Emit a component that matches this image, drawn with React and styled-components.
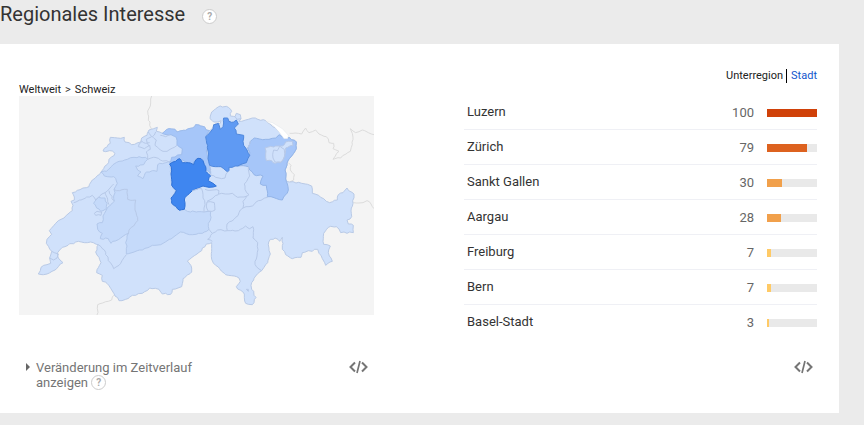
import styled, { createGlobalStyle } from 'styled-components';

const GlobalStyle = createGlobalStyle`
    body {
        margin: 0;
        background-color: #ebebeb;
        font-family: Roboto, "Liberation Sans", sans-serif;
        color: #333;
    }
`;
const Page = styled.main`
    padding-right: 25px;
`;
const Header = styled.header`
    display: flex;
    align-items: center;
    gap: 17px;
    height: 28px;
    padding-bottom: 16px;
`;
const Title = styled.h1`
    margin: 0;
    font-size: 20px;
    font-weight: 400;
    line-height: 28px;
`;
const HelpButton = styled.button`
    box-sizing: border-box;
    display: inline-flex;
    align-items: center;
    justify-content: center;
    width: 15px;
    height: 15px;
    margin: ${props => props.$raised ? "4px 0 0" : "0"};
    padding: 0;
    border: 1px solid #ccc;
    border-radius: 50%;
    background-color: #fff;
    color: #aaa;
    font-family: inherit;
    font-size: 10px;
    font-weight: 700;
    line-height: 13px;
    vertical-align: top;
    cursor: pointer;
`;
const Card = styled.section`
    display: grid;
    grid-template-columns: 355fr 353fr;
    column-gap: 90px;
    padding: 25px 22px 23px 19px;
    background-color: #fff;
`;
const MapPanel = styled.div`
    padding-top: 14px;
`;
const Breadcrumb = styled.nav`
    display: flex;
    gap: 4px;
    font-size: 11px;
    line-height: 13px;
`;
const Crumb = styled.a`
    color: #222;
    text-decoration: none;
`;
const MapSvg = styled.svg`
    display: block;
    width: 100%;
    background-color: #f4f4f4;
`;
const Tabs = styled.nav`
    display: flex;
    justify-content: flex-end;
    padding-bottom: 12px;
    font-size: 11px;
    line-height: 14px;
`;
const Tab = styled.a`
    padding: ${props => props.$active ? "0 3px 0 0" : "0 0 0 4px"};
    border-right: ${props => props.$active ? "1px solid #000" : "none"};
    color: ${props => props.$active ? "#222" : "#15c"};
    text-decoration: none;
`;
const RegionTable = styled.table`
    width: 100%;
    border-spacing: 0;
    font-size: 13px;
`;
const Cell = styled.td`
    box-sizing: border-box;
    height: 35px;
    padding: 0;
    border-bottom: 1px solid #eff0f5;

    tr:last-child & {
        border-bottom-color: transparent;
    }
`;
const NameCell = styled(Cell).attrs({ as: "th", scope: "row" })`
    padding: 0 0 2px 3px;
    font-weight: 400;
    text-align: left;
`;
const ValueCell = styled(Cell)`
    color: #666;
    text-align: right;
`;
const BarCell = styled(Cell)`
    width: 63px;
    padding: 2px 0 0 13px;
`;
const Track = styled.div`
    height: 8px;
    background-color: #e9e9e9;
`;
const Bar = styled.div`
    height: 8px;
    background-color: ${props => props.color};
`;
const Footer = styled.footer`
    display: flex;
    align-items: flex-start;
    justify-content: ${props => props.$end ? "flex-end" : "space-between"};
    padding: ${props => props.$end ? "20px 4px 0" : "20px 6px 0"};
`;
const TimeChange = styled.div`
    display: flex;
    gap: 6px;
    max-width: 180px;
    color: #757575;
    font-size: 13px;
    line-height: 15px;
`;
const Arrow = styled.span`
    flex: none;
    margin: 3px 0 0 1px;
    height: 0;
    border: solid transparent;
    border-width: 4px 0 4px 4px;
    border-left-color: #666;
`;
const TextLink = styled.a`
    color: inherit;
    text-decoration: none;
`;
const EmbedButton = styled.button`
    display: flex;
    padding: 0;
    border: none;
    background: none;
    color: #757575;
    cursor: pointer;
`;

const regions = [
  { name: "Luzern", value: 100, color: "#d04109" },
  { name: "Zürich", value: 79, width: 80, color: "#dd621f" },
  { name: "Sankt Gallen", value: 30, color: "#f1a04b" },
  { name: "Aargau", value: 28, color: "#f1a04b" },
  { name: "Freiburg", value: 7, width: 8, color: "#ffca66" },
  { name: "Bern", value: 7, width: 8, color: "#ffca66" },
  { name: "Basel-Stadt", value: 3, width: 4, color: "#ffca66" },
];

// Outline of the whole country, clockwise from Geneva
const country = "58,534 66,514 95,502 92,486 98,466 82,442 84,430 98,415 91,404 110,382 142,358 160,344 162,328 156,316 166,312 160,290 175,283 210,272 216,258 246,228 265,205 270,190 288,172 280,165 252,165 274,142 274,124 296,126 316,124 318,138 338,146 365,138 368,126 384,118 390,102 404,98 415,94 412,106 430,112 450,98 468,100 474,108 500,103 520,96 530,86 556,92 562,102 572,104 582,94 590,82 604,82 606,74 584,78 573,68 578,48 590,38 604,30 628,34 638,46 634,60 648,62 652,52 664,56 666,68 660,76 680,72 700,66 740,74 770,96 795,124 812,125 832,138 832,158 808,192 798,222 802,256 848,262 878,270 880,292 905,304 932,320 955,312 958,296 972,290 984,276 1005,294 1002,322 996,345 998,362 984,372 988,384 1003,388 1003,410 965,410 952,392 928,394 914,412 914,445 934,450 928,470 940,496 920,508 910,488 900,472 896,460 850,470 846,484 820,488 800,476 790,460 790,424 782,436 768,426 754,430 748,446 754,474 746,500 728,524 710,540 698,560 698,580 711,604 700,626 680,622 676,594 652,572 664,556 660,546 620,536 590,508 578,490 578,440 562,444 550,456 548,464 505,495 518,516 518,528 492,548 488,572 460,580 455,595 430,594 420,580 392,576 370,592 340,598 320,610 300,614 288,600 264,562 250,556 250,538 233,530 246,500 230,468 238,446 215,438 170,438 130,454 116,470 118,486 132,500 108,522 84,534 58,534";

const cantons = [
  // Bern and Freiburg
  { fill: "#c5dafa", stroke: "#b2c8eb", points: "246,228 262,226 282,206 300,196 325,190 345,184 360,182 380,184 386,190 374,206 350,210 356,222 366,228 356,240 372,248 378,232 400,224 414,226 416,206 440,200 452,196 456,220 458,264 470,280 458,302 458,318 482,342 496,340 505,346 555,348 575,346 576,364 568,382 570,400 550,412 520,416 484,408 465,422 425,446 400,448 370,462 345,468 322,474 324,450 320,440 328,412 305,426 276,442 268,428 244,428 250,412 236,400 234,384 250,380 252,360 262,342 272,330 286,316 284,300 288,290 285,280 295,262 284,242 256,240 246,228" },
  { fill: "#c5dafa", stroke: "#b2c8eb", points: "224,322 238,304 258,306 264,322 262,338 245,346 224,322" },
  // Aargau
  { fill: "#a6c6f9", stroke: "#9dbcec", points: "430,112 450,98 468,100 474,108 500,103 520,96 530,86 556,92 562,102 572,104 560,122 566,148 562,165 572,210 575,234 560,222 548,188 530,190 524,206 508,200 482,190 470,198 452,202 458,184 488,176 490,158 474,146 472,124 456,116 430,112" },
  // Sankt Gallen
  { fill: "#a6c6f9", stroke: "#94b5e8", points: "694,136 706,126 740,130 770,126 780,116 795,124 812,125 832,138 832,158 808,192 798,222 802,256 808,282 790,312 745,302 742,268 724,264 732,240 705,236 688,212 656,210 680,200 692,178 686,156 694,136" },
  // Appenzell
  { fill: "#d0e1fb", stroke: "#b7c9e8", points: "738,156 770,150 790,150 800,138 820,136 822,148 800,156 796,182 785,198 770,202 758,194 742,194 738,156" },
  // Zürich
  { fill: "#5f9af3", stroke: "#4f88dd", points: "560,122 574,108 582,98 584,86 598,82 604,100 612,92 614,66 626,66 630,76 644,78 652,72 658,84 646,96 652,114 674,118 672,136 680,156 692,178 682,200 656,210 630,214 626,228 606,212 572,208 568,180 566,148 560,122" },
  // Luzern
  { fill: "#3f86f0", stroke: "#2f72d8", points: "452,204 470,196 482,188 490,200 508,200 524,206 532,190 546,188 560,212 560,226 575,240 568,254 582,262 592,270 570,274 552,270 520,284 498,304 496,340 482,343 458,322 456,306 472,284 458,268 458,225 452,204" },
];

const inland = [
  "164,320 220,298 230,312 258,290 284,264",
  "258,290 264,304 270,326",
  "270,284 284,314",
  "226,352 234,346 248,348 246,358 230,358 226,352",
  "325,280 326,310 350,312 348,342 356,374 330,402 328,414",
  "285,280 302,284 325,280",
  "238,446 256,462 260,476 284,518 305,502 322,476",
  "570,400 580,412 566,430 580,436",
  "580,412 596,402 625,404 658,404 680,390 692,398 702,392 702,426 716,440 714,480 708,496 712,512 728,524",
  "625,404 624,384 650,364 660,350 672,336 700,330 718,314 746,304",
  "688,212 692,240 676,264 678,280 690,296 672,316 672,336",
  "600,294 640,292 656,304 684,300",
  "520,284 548,278 552,306 558,326 555,348",
  "564,318 586,320 588,342 568,346 562,330 564,318",
  "558,280 600,284 598,296 576,310 564,316",
  "572,212 576,238 600,246 618,246 628,226",
  "386,190 382,168 394,160 392,148 376,158 358,152 368,138",
  "410,108 400,122 412,132 408,148 424,162 444,166 474,148",
  "388,108 398,122 382,130 390,150",
  "386,190 408,184 424,192 450,198",
  "424,118 440,122 452,116",
  "366,134 380,142 392,140",
  "764,162 775,164 782,150 796,160 797,182 785,200 768,198 762,186 764,162",
  "92,486 104,492 114,486 118,474 98,466",
  "694,136 686,156",
  "648,62 654,70 666,68",
  "682,580 688,580 688,586 682,580",
];

const neighbours = [
  "398,0 394,30 386,45 392,88 398,100",
  "812,112 848,114 860,96 870,110 890,102 900,114 922,122 930,140 944,142 942,158 960,166 942,190 965,186 994,166 1000,145 1002,130 994,98 1010,110 1030,102 1065,116",
  "808,200 816,208 814,222 826,236 824,252 812,258",
  "1003,320 1032,320 1044,314 1056,324 1065,338",
  "284,598 278,612 236,626 234,657",
];

// Adds small kinks along each straight piece. They depend only on the place,
// so both sides of a shared border stay together
const rugged = points => {
  const list = points.split(" ").map(p => p.split(",").map(Number));
  const out = [list[0]];
  for (let i = 1; i < list.length; i++) {
    const [ax, ay] = list[i - 1];
    const [bx, by] = list[i];
    const pieces = Math.round(Math.hypot(bx - ax, by - ay) / 9);
    for (let k = 1; k < pieces; k++) {
      const x = ax + (bx - ax) * k / pieces;
      const y = ay + (by - ay) * k / pieces;
      out.push([x + 2 * Math.sin(x * 7 + y * 3), y + 2 * Math.cos(x * 5 - y * 4)]);
    }
    out.push([bx, by]);
  }
  return out.map(p => p.map(Math.round).join(",")).join(" ");
};

const SwissMap = () => (
  <MapSvg viewBox="0 0 1065 657" role="img" aria-label="Karte der Schweiz" fill="none" strokeWidth="3" strokeLinejoin="round">
    {neighbours.map(line => (
      <polyline key={line} points={rugged(line)} stroke="#dcdcdc" />
    ))}
    <polygon points={rugged(country)} fill="#d0e1fb" stroke="#b9cae6" />
    {cantons.map(canton => (
      <polygon key={canton.points} points={rugged(canton.points)} fill={canton.fill} stroke={canton.stroke} />
    ))}
    {inland.map(line => (
      <polyline key={line} points={rugged(line)} stroke="#b7c9e8" />
    ))}
    <polygon points="741,76 760,80 790,98 808,118 806,128 795,128 780,108 762,88" fill="#fff" stroke="#d8dde5" strokeWidth="1" />
  </MapSvg>
);

const EmbedIcon = () => (
  <svg width="19" height="14" viewBox="0 0 19 14" fill="none" stroke="currentColor" strokeWidth="2" aria-hidden="true">
    <path d="M6 2.5 1.5 7 6 11.5M13 2.5 17.5 7 13 11.5" />
    <path d="M11 1 8 13" strokeWidth="1.7" />
  </svg>
);

const App = () => {
  return (
    <Page>
        <GlobalStyle/>
        <Header>
            <Title>Regionales Interesse</Title>
            <HelpButton type="button" $raised>?</HelpButton>
        </Header>
        <Card>
            <MapPanel>
                <Breadcrumb>
                    <Crumb href="#welt">Weltweit</Crumb>
                    <span>&gt;</span>
                    <Crumb href="#schweiz">Schweiz</Crumb>
                </Breadcrumb>
                <SwissMap/>
            </MapPanel>
            <div>
                <Tabs>
                    <Tab href="#unterregion" $active>Unterregion</Tab>
                    <Tab href="#stadt">Stadt</Tab>
                </Tabs>
                <RegionTable>
                    <tbody>
                        {regions.map(region => (
                            <tr key={region.name}>
                                <NameCell>{region.name}</NameCell>
                                <ValueCell>{region.value}</ValueCell>
                                <BarCell>
                                    <Track>
                                        <Bar color={region.color} style={{ width: `${region.width || region.value}%` }}/>
                                    </Track>
                                </BarCell>
                            </tr>
                        ))}
                    </tbody>
                </RegionTable>
            </div>
            <Footer>
                <TimeChange>
                    <Arrow/>
                    <div>
                        <TextLink href="#zeitverlauf">Veränderung im Zeitverlauf anzeigen</TextLink>{" "}
                        <HelpButton type="button">?</HelpButton>
                    </div>
                </TimeChange>
                <EmbedButton type="button" aria-label="Karte einbetten"><EmbedIcon/></EmbedButton>
            </Footer>
            <Footer $end>
                <EmbedButton type="button" aria-label="Liste einbetten"><EmbedIcon/></EmbedButton>
            </Footer>
        </Card>
    </Page>
  )
}

export default App
